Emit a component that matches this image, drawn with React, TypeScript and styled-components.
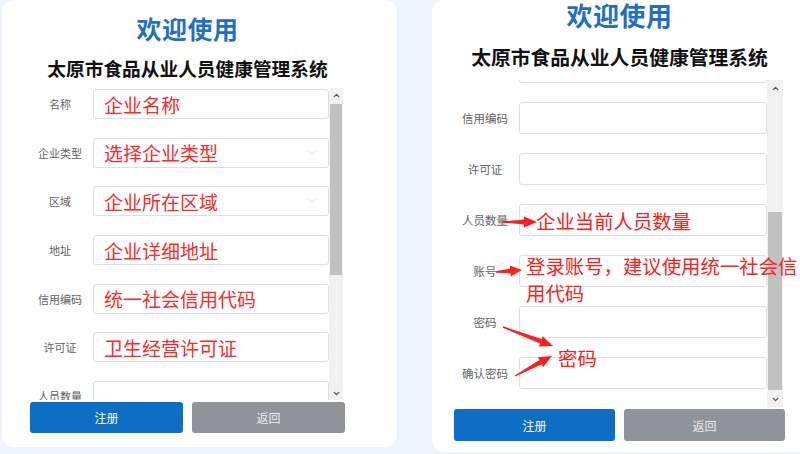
import styled, { createGlobalStyle } from 'styled-components';
import { useLayoutEffect, useRef } from 'react';
import { ChevronDown, ChevronUp } from 'lucide-react';

const GlobalStyle = createGlobalStyle`
    html, body {
        margin: 0;
        padding: 0;
        overflow: hidden;
        background: #eef3fd;
    }
    body {
        font-family: 'Noto Sans CJK SC', 'Noto Sans', sans-serif;
    }
`;

interface Irow {
    label: string;
    value?: string;
    select?: boolean;
}

const rows: Irow[] = [
    { label: '名称', value: '企业名称' },
    { label: '企业类型', value: '选择企业类型', select: true },
    { label: '区域', value: '企业所在区域', select: true },
    { label: '地址', value: '企业详细地址' },
    { label: '信用编码', value: '统一社会信用代码' },
    { label: '许可证', value: '卫生经营许可证' },
    { label: '人员数量' },
    { label: '账号' },
    { label: '密码' },
    { label: '确认密码' },
];

interface Isize {
    cardW: number;
    cardH: number;
    padL: number;
    titleTop: number;
    titleSize: number;
    titleLine: number;
    subGap: number;
    subSize: number;
    subLine: number;
    formGap: number;
    formH: number;
    rowH: number;
    rowGap: number;
    padTop: number;
    labelW: number;
    labelSize: number;
    inputW: number;
    barW: number;
    thumbTop: number;
    thumbH: number;
    scrollTop: number;
    btnGap: number;
    btnW: number;
    btnH: number;
}

const leftSize: Isize = {
    cardW: 395,
    cardH: 447,
    padL: 28,
    titleTop: 11,
    titleSize: 25,
    titleLine: 34,
    subGap: 10,
    subSize: 18.7,
    subLine: 26,
    formGap: 7,
    formH: 312,
    rowH: 30,
    rowGap: 18.7,
    padTop: 1,
    labelW: 60,
    labelSize: 11,
    inputW: 236,
    barW: 14,
    thumbTop: 16,
    thumbH: 171,
    scrollTop: 0,
    btnGap: 9,
    btnW: 153,
    btnH: 31,
};

const rightSize: Isize = {
    cardW: 390,
    cardH: 452,
    padL: 22,
    titleTop: 0,
    titleSize: 26,
    titleLine: 30,
    subGap: 13,
    subSize: 19.8,
    subLine: 28,
    formGap: 9,
    formH: 327,
    rowH: 32,
    rowGap: 19,
    padTop: 0,
    labelW: 62,
    labelSize: 11.5,
    inputW: 248,
    barW: 16,
    thumbTop: 132,
    thumbH: 178,
    scrollTop: 182,
    btnGap: 9,
    btnW: 161,
    btnH: 32,
};

const Page = styled.div`
    width: 800px;
    height: 454px;
    display: flex;
    align-items: flex-start;
    gap: 35px;
    background: #eef3fd;
    overflow: hidden;
`;

const Card = styled.div<{ $s: Isize; $first?: boolean }>`
    position: relative;
    flex: none;
    box-sizing: border-box;
    width: ${p => p.$s.cardW}px;
    height: ${p => p.$s.cardH}px;
    margin-left: ${p => (p.$first ? 2 : 0)}px;
    padding: ${p => p.$s.titleTop}px 0 0 ${p => p.$s.padL}px;
    background: #ffffff;
    border-radius: 12px;
    display: flex;
    flex-direction: column;
`;

const Content = styled.div<{ $s: Isize }>`
    width: ${p => p.$s.btnW * 2 + p.$s.btnGap}px;
    display: flex;
    flex-direction: column;
`;

const Title = styled.h1<{ $s: Isize }>`
    margin: 0;
    text-align: center;
    font-size: ${p => p.$s.titleSize}px;
    line-height: ${p => p.$s.titleLine}px;
    font-weight: 700;
    color: #1f6fc4;
    letter-spacing: 0.5px;
`;

const SubTitle = styled.h2<{ $s: Isize }>`
    margin: ${p => p.$s.subGap}px 0 0;
    text-align: center;
    font-size: ${p => p.$s.subSize}px;
    line-height: ${p => p.$s.subLine}px;
    font-weight: 700;
    color: #111111;
    white-space: nowrap;
`;

const FormPanel = styled.div<{ $s: Isize }>`
    margin-top: ${p => p.$s.formGap}px;
    height: ${p => p.$s.formH}px;
    display: flex;
`;

const ScrollView = styled.div<{ $s: Isize }>`
    width: ${p => p.$s.labelW + 3 + p.$s.inputW}px;
    height: 100%;
    overflow: hidden;
`;

const RowList = styled.div<{ $s: Isize }>`
    display: flex;
    flex-direction: column;
    gap: ${p => p.$s.rowGap}px;
    padding: ${p => p.$s.padTop}px 0 20px;
`;

const Row = styled.div<{ $s: Isize }>`
    display: flex;
    align-items: center;
    gap: 3px;
    height: ${p => p.$s.rowH}px;
    flex: none;
`;

const Label = styled.span<{ $s: Isize }>`
    width: ${p => p.$s.labelW}px;
    text-align: center;
    font-size: ${p => p.$s.labelSize}px;
    color: #606266;
    white-space: nowrap;
`;

const Field = styled.div<{ $s: Isize }>`
    box-sizing: border-box;
    width: ${p => p.$s.inputW}px;
    height: 100%;
    border: 1px solid #dcdfe6;
    border-radius: 3px;
    background: #ffffff;
    padding: 0 10px;
    display: flex;
    align-items: center;
    justify-content: space-between;
`;

const FieldText = styled.span`
    font-size: 19px;
    line-height: 1;
    color: #fa2a2a;
    white-space: nowrap;
`;

const ScrollBar = styled.div<{ $s: Isize }>`
    position: relative;
    width: ${p => p.$s.barW}px;
    height: 100%;
    background: #f1f1f1;
    display: flex;
    flex-direction: column;
    justify-content: space-between;
    align-items: center;
`;

const BarArrow = styled.div<{ $s: Isize }>`
    height: ${p => p.$s.barW}px;
    display: flex;
    align-items: center;
    justify-content: center;
    color: #505050;
`;

const Thumb = styled.div`
    position: absolute;
    left: 1px;
    right: 1px;
    background: #c1c1c1;
`;

const Buttons = styled.div<{ $s: Isize }>`
    margin-top: 2px;
    display: flex;
    gap: ${p => p.$s.btnGap}px;
`;

const Button = styled.button<{ $s: Isize; $back?: boolean }>`
    width: ${p => p.$s.btnW}px;
    height: ${p => p.$s.btnH}px;
    border: none;
    border-radius: 3px;
    background: ${p => (p.$back ? '#909399' : '#0c6ec5')};
    color: ${p => (p.$back ? '#ececec' : '#ffffff')};
    font-family: inherit;
    font-size: 12px;
    cursor: pointer;
`;

const Overlay = styled.div`
    position: absolute;
    inset: 0;
    pointer-events: none;
`;

const Note = styled.div<{ $x: number; $y: number }>`
    position: absolute;
    left: ${p => p.$x}px;
    top: ${p => p.$y}px;
    font-size: 19.4px;
    line-height: 27px;
    color: #fa2020;
    white-space: nowrap;
`;

const ArrowLayer = styled.svg`
    position: absolute;
    left: 0;
    top: 0;
`;

// tapered hand-drawn style arrow, thin tail, fat head
const arrowPoints = (x1: number, y1: number, x2: number, y2: number) => {
    const len = Math.hypot(x2 - x1, y2 - y1);
    const ux = (x2 - x1) / len;
    const uy = (y2 - y1) / len;
    const nx = -uy;
    const ny = ux;
    const head = Math.min(13, len * 0.45);
    const bx = x2 - ux * head;
    const by = y2 - uy * head;
    const pts = [
        [x1 + nx * 0.7, y1 + ny * 0.7],
        [bx + nx * 2.4, by + ny * 2.4],
        [bx + nx * 5.5, by + ny * 5.5],
        [x2, y2],
        [bx - nx * 5.5, by - ny * 5.5],
        [bx - nx * 2.4, by - ny * 2.4],
        [x1 - nx * 0.7, y1 - ny * 0.7],
    ];
    return pts.map(p => p.map(v => v.toFixed(1)).join(',')).join(' ');
};

const arrows = [
    [71, 222, 105, 222],
    [64, 272, 90, 270],
    [71, 327, 121, 346],
    [83, 376, 120, 356],
];

const RegisterCard = ({ s, first, filled }: { s: Isize; first?: boolean; filled: boolean }) => {
    const view = useRef<HTMLDivElement>(null);

    useLayoutEffect(() => {
        if (view.current) view.current.scrollTop = s.scrollTop;
    }, [s.scrollTop]);

    return (
        <Card $s={s} $first={first}>
            <Content $s={s}>
                <Title $s={s}>欢迎使用</Title>
                <SubTitle $s={s}>太原市食品从业人员健康管理系统</SubTitle>
                <FormPanel $s={s}>
                    <ScrollView $s={s} ref={view}>
                        <RowList $s={s}>
                            {rows.map(row => (
                                <Row $s={s} key={row.label}>
                                    <Label $s={s}>{row.label}</Label>
                                    <Field $s={s}>
                                        <FieldText>{filled ? row.value : ''}</FieldText>
                                        {row.select && (
                                            <ChevronDown size={12} color="#c0c4cc" strokeWidth={1.5} />
                                        )}
                                    </Field>
                                </Row>
                            ))}
                        </RowList>
                    </ScrollView>
                    <ScrollBar $s={s}>
                        <BarArrow $s={s}>
                            <ChevronUp size={9} strokeWidth={3.5} />
                        </BarArrow>
                        <Thumb style={{ top: s.thumbTop, height: s.thumbH }} />
                        <BarArrow $s={s}>
                            <ChevronDown size={9} strokeWidth={3.5} />
                        </BarArrow>
                    </ScrollBar>
                </FormPanel>
                <Buttons $s={s}>
                    <Button $s={s}>注册</Button>
                    <Button $s={s} $back>
                        返回
                    </Button>
                </Buttons>
            </Content>
            {!filled && (
                <Overlay>
                    <ArrowLayer width={s.cardW} height={s.cardH}>
                        {arrows.map((a, i) => (
                            <polygon key={i} points={arrowPoints(a[0], a[1], a[2], a[3])} fill="#fa2020" />
                        ))}
                    </ArrowLayer>
                    <Note $x={104} $y={207}>企业当前人员数量</Note>
                    <Note $x={94} $y={252}>
                        登录账号，建议使用统一社会信
                        <br />
                        用代码
                    </Note>
                    <Note $x={126} $y={344}>密码</Note>
                </Overlay>
            )}
        </Card>
    );
};

export default function App() {
    return (
        <>
            <GlobalStyle />
            <Page>
                <RegisterCard s={leftSize} first filled />
                <RegisterCard s={rightSize} filled={false} />
            </Page>
        </>
    );
}
